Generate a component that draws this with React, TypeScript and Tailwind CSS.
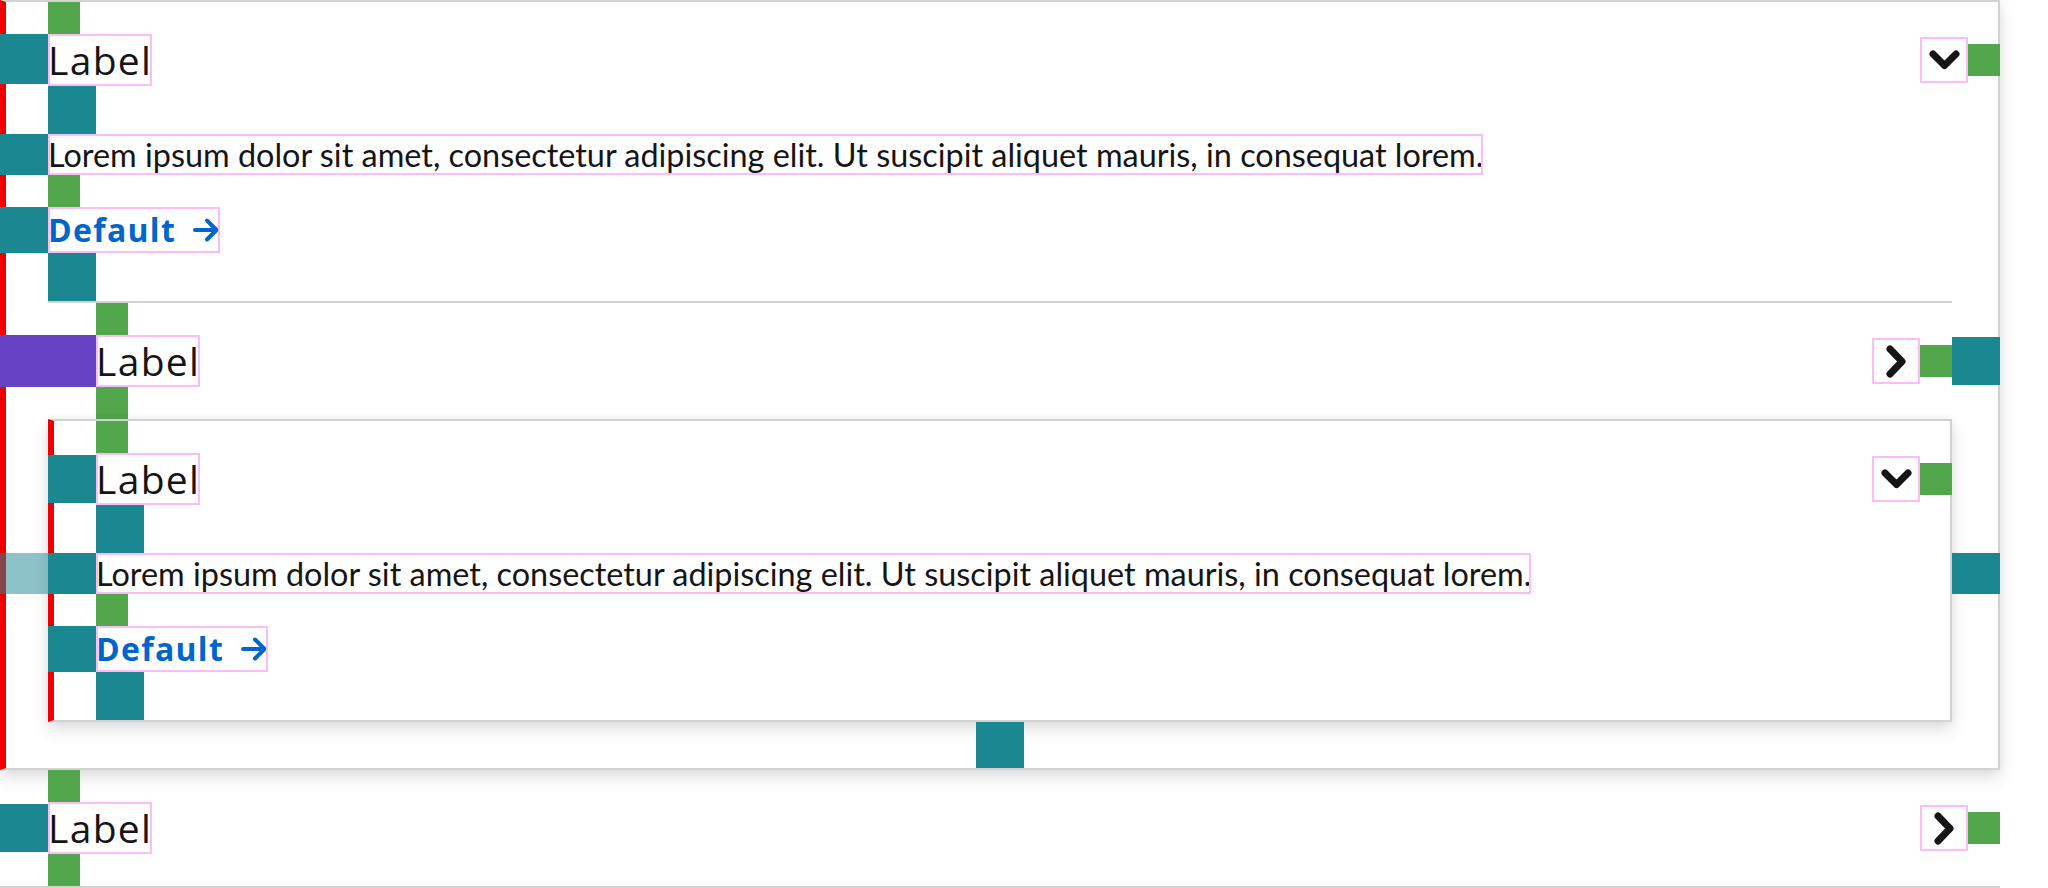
import React from "react";

const teal = "bg-[#1b8791]";
const green = "bg-[#52a64b]";
const outlined = "outline-2 -outline-offset-2 outline-[#f9bdf9]";

const ChevronDown = () => (
  <svg width="31" height="21" viewBox="0 0 31 21" fill="none">
    <polyline
      points="4,4 15.5,15.5 27,4"
      stroke="#151515"
      strokeWidth="7"
      strokeLinecap="round"
      strokeLinejoin="round"
    />
  </svg>
);

const ChevronRight = () => (
  <svg width="21" height="33" viewBox="0 0 21 33" fill="none">
    <polyline
      points="4,4 16,16.5 4,29"
      stroke="#151515"
      strokeWidth="7"
      strokeLinecap="round"
      strokeLinejoin="round"
    />
  </svg>
);

const ArrowRight = () => (
  <svg width="27" height="26" viewBox="0 0 27 26" fill="none">
    <path
      d="M2 13 H24 M14 3.5 L23.5 13 L14 22.5"
      stroke="#0066cc"
      strokeWidth="4"
      strokeLinecap="round"
      strokeLinejoin="round"
    />
  </svg>
);

const ToggleIcon = ({ open }: { open: boolean }) => (
  <div className={`flex h-[46px] w-12 items-center justify-center ${outlined}`}>
    {open ? <ChevronDown /> : <ChevronRight />}
  </div>
);

const Label = () => (
  <span
    className={`flex items-center self-stretch font-['Open_Sans'] text-[39px] leading-[52px] tracking-[1.3px] ${outlined}`}
  >
    Label
  </span>
);

const Lorem = () => (
  <p className={`whitespace-nowrap text-[32.4px] leading-[41px] ${outlined}`}>
    Lorem ipsum dolor sit amet, consectetur adipiscing elit. Ut suscipit
    aliquet mauris, in consequat lorem.
  </p>
);

const DefaultLink = () => (
  <a
    className={`flex h-[46px] items-center gap-[17px] font-['Open_Sans'] text-[32px] font-bold text-[#0066cc] ${outlined}`}
  >
    <span className="tracking-[1.3px]">Default</span>
    <ArrowRight />
  </a>
);

const App = () => {
  return (
    <div className="h-[888px] w-[2048px] overflow-hidden bg-white font-['Lato'] text-[#151515]">
      <div className="w-[2000px]">
        {/* expanded item */}
        <div className="border-2 border-l-[6px] border-[#d2d2d2] border-l-[#ee0000] bg-white shadow-[0_8px_16px_0_rgba(3,3,3,0.12),0_0_8px_0_rgba(3,3,3,0.06)]">
          <div className="-ml-[6px] -mr-[2px] flex flex-col">
            <div className={`ml-12 h-8 w-8 ${green}`} />
            <div className="flex h-[52px] items-center">
              <div className={`h-[50px] w-12 self-start ${teal}`} />
              <Label />
              <div className="flex-1" />
              <ToggleIcon open />
              <div className={`h-8 w-8 ${green}`} />
            </div>
            <div className={`ml-12 h-12 w-12 ${teal}`} />
            <div className="flex h-[41px]">
              <div className={`w-12 ${teal}`} />
              <Lorem />
            </div>
            <div className={`ml-12 h-8 w-8 ${green}`} />
            <div className="flex h-[46px]">
              <div className={`w-12 ${teal}`} />
              <DefaultLink />
            </div>
            <div className={`ml-12 h-12 w-12 ${teal}`} />
            <div className="mx-12 h-[2px] bg-[#d2d2d2]" />

            {/* nested group */}
            <div className={`ml-24 h-8 w-8 ${green}`} />
            <div className="flex h-[52px] items-center">
              <div className="h-[52px] w-24 bg-[#6643c4]" />
              <Label />
              <div className="flex-1" />
              <ToggleIcon open={false} />
              <div className={`h-8 w-8 ${green}`} />
              <div className={`h-12 w-12 ${teal}`} />
            </div>
            <div className={`ml-24 h-8 w-8 ${green}`} />
            <div className="mx-12 border-2 border-l-[6px] border-[#d2d2d2] border-l-[#ee0000] bg-white shadow-[0_8px_16px_0_rgba(3,3,3,0.12),0_0_8px_0_rgba(3,3,3,0.06)]">
              <div className="-ml-[6px] -mr-[2px] flex flex-col">
                <div className={`ml-12 h-8 w-8 ${green}`} />
                <div className="flex h-[52px] items-center">
                  <div className={`h-12 w-12 ${teal}`} />
                  <Label />
                  <div className="flex-1" />
                  <ToggleIcon open />
                  <div className={`h-8 w-8 ${green}`} />
                </div>
                <div className={`ml-12 h-12 w-12 ${teal}`} />
                <div className="-mx-12 flex h-[41px]">
                  <div className="w-12 bg-[#1b8791]/50" />
                  <div className={`w-12 ${teal}`} />
                  <Lorem />
                  <div className="flex-1" />
                  <div className={`w-12 ${teal}`} />
                </div>
                <div className={`ml-12 h-8 w-8 ${green}`} />
                <div className="flex h-[46px]">
                  <div className={`w-12 ${teal}`} />
                  <DefaultLink />
                </div>
                <div className={`ml-12 h-12 w-12 ${teal}`} />
              </div>
            </div>
            <div className={`mx-auto h-[46px] w-12 ${teal}`} />
          </div>
        </div>

        {/* collapsed item */}
        <div className="flex flex-col border-b-2 border-[#d2d2d2]">
          <div className={`ml-12 h-8 w-8 ${green}`} />
          <div className="flex h-[52px] items-center">
            <div className={`h-12 w-12 ${teal}`} />
            <Label />
            <div className="flex-1" />
            <ToggleIcon open={false} />
            <div className={`h-8 w-8 ${green}`} />
          </div>
          <div className={`ml-12 h-8 w-8 ${green}`} />
        </div>
      </div>
    </div>
  );
};

export default App;
